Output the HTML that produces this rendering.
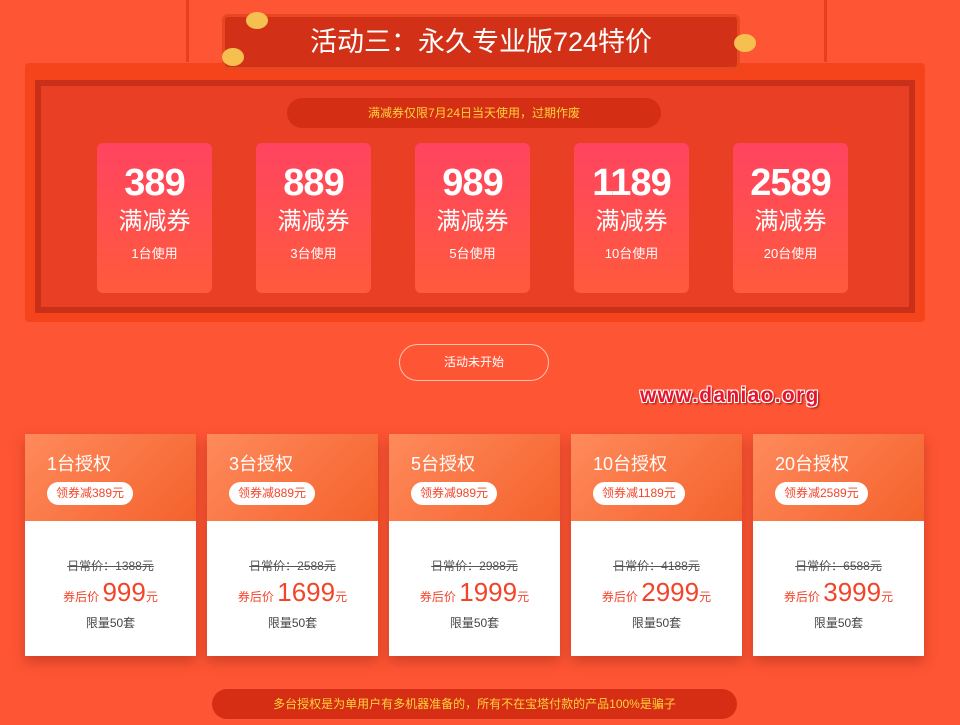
<!DOCTYPE html>
<html><head><meta charset="utf-8"><style>
*{margin:0;padding:0;box-sizing:border-box}
body{width:960px;height:725px;background:#fe5534;font-family:"Liberation Sans","Noto Sans CJK SC",sans-serif;position:relative;overflow:hidden}
.abs{position:absolute}
.rope{position:absolute;top:0;width:3px;height:62px;background:#e8401f}
.frame{left:25px;top:63px;width:900px;height:259px;background:#f5441c;border-radius:4px}
.inner{left:35px;top:80px;width:880px;height:233px;background:#c9301a;padding:6px}
.inner div.in2{width:100%;height:100%;background:#e93f24}
.title{left:222px;top:14px;width:518px;height:56px;background:#d23017;border:3px solid #e8481f;border-radius:6px;color:#fff;font-size:27px;text-align:center;line-height:50px}
.notice{left:287px;top:98px;width:374px;height:30px;border-radius:15px;background:#d42f15;color:#ffd23a;font-size:12px;text-align:center;line-height:30px}
.tk{top:143px;width:115px;height:150px;background:linear-gradient(#ff4460,#ff5a3c);border-radius:6px;color:#fff;text-align:center}
.tk .n{font-size:38px;font-weight:bold;margin-top:18px;line-height:44px;letter-spacing:-1px}
.tk .m{font-size:24px;line-height:30px;margin-top:2px}
.tk .u{font-size:13px;margin-top:6px}
.btn{left:399px;top:344px;width:150px;height:37px;border:1px solid #ffc3b0;border-radius:19px;color:#fff;font-size:12px;text-align:center;line-height:35px}
.wm{left:640px;top:384px;font-size:21px;letter-spacing:1.3px;font-weight:bold;color:#e8132c;text-shadow:1px 1px 0 #fff,-1px -1px 0 #fff,1px -1px 0 #fff,-1px 1px 0 #fff,2px 2px 2px #8a1a10}
.card{top:434px;width:171px;height:222px;background:#fff;box-shadow:0 6px 12px rgba(120,30,10,.35)}
.card .h{height:87px;background:linear-gradient(135deg,#ff8a5c,#f4622c);padding:19px 0 0 22px;color:#fff}
.card .h .t{font-size:18px;line-height:22px}
.card .h .p{display:inline-block;margin-top:7px;background:#fff;color:#f3442a;font-size:12px;border-radius:12px;padding:0 9px;line-height:23px}
.card .b{text-align:center;padding-top:36px}
.card .o{font-size:12px;color:#555;text-decoration:line-through}
.card .r{color:#f3442a;font-size:12px;margin-top:3px}
.card .r b{font-weight:normal;font-size:26px}
.card .l{font-size:12px;color:#444;margin-top:6px}
.foot{left:212px;top:689px;width:525px;height:30px;border-radius:15px;background:#d62e15;color:#ffd23a;font-size:12px;text-align:center;line-height:30px}
</style></head><body>
<div class="rope" style="left:186px"></div><div class="rope" style="left:824px"></div>
<div class="abs frame"></div>
<div class="abs inner"><div class="in2"></div></div>
<div class="abs title">活动三：永久专业版724特价</div>
<div class="abs" style="left:246px;top:12px;width:22px;height:17px;border-radius:50%;background:#f6c050"></div>
<div class="abs" style="left:222px;top:48px;width:22px;height:18px;border-radius:50%;background:#f6c050"></div>
<div class="abs" style="left:734px;top:34px;width:22px;height:18px;border-radius:50%;background:#f6c050"></div>
<div class="abs notice">满减券仅限7月24日当天使用，过期作废</div>
<div class="abs tk" style="left:97px"><div class="n">389</div><div class="m">满减券</div><div class="u">1台使用</div></div>
<div class="abs tk" style="left:256px"><div class="n">889</div><div class="m">满减券</div><div class="u">3台使用</div></div>
<div class="abs tk" style="left:415px"><div class="n">989</div><div class="m">满减券</div><div class="u">5台使用</div></div>
<div class="abs tk" style="left:574px"><div class="n">1189</div><div class="m">满减券</div><div class="u">10台使用</div></div>
<div class="abs tk" style="left:733px"><div class="n">2589</div><div class="m">满减券</div><div class="u">20台使用</div></div>
<div class="abs btn">活动未开始</div>
<div class="abs wm">www.daniao.org</div>
<div class="abs card" style="left:25px"><div class="h"><div class="t">1台授权</div><div class="p">领券减389元</div></div><div class="b"><div class="o">日常价：1388元</div><div class="r">券后价 <b>999</b>元</div><div class="l">限量50套</div></div></div>
<div class="abs card" style="left:207px"><div class="h"><div class="t">3台授权</div><div class="p">领券减889元</div></div><div class="b"><div class="o">日常价：2588元</div><div class="r">券后价 <b>1699</b>元</div><div class="l">限量50套</div></div></div>
<div class="abs card" style="left:389px"><div class="h"><div class="t">5台授权</div><div class="p">领券减989元</div></div><div class="b"><div class="o">日常价：2988元</div><div class="r">券后价 <b>1999</b>元</div><div class="l">限量50套</div></div></div>
<div class="abs card" style="left:571px"><div class="h"><div class="t">10台授权</div><div class="p">领券减1189元</div></div><div class="b"><div class="o">日常价：4188元</div><div class="r">券后价 <b>2999</b>元</div><div class="l">限量50套</div></div></div>
<div class="abs card" style="left:753px"><div class="h"><div class="t">20台授权</div><div class="p">领券减2589元</div></div><div class="b"><div class="o">日常价：6588元</div><div class="r">券后价 <b>3999</b>元</div><div class="l">限量50套</div></div></div>
<div class="abs foot">多台授权是为单用户有多机器准备的，所有不在宝塔付款的产品100%是骗子</div>
</body></html>
